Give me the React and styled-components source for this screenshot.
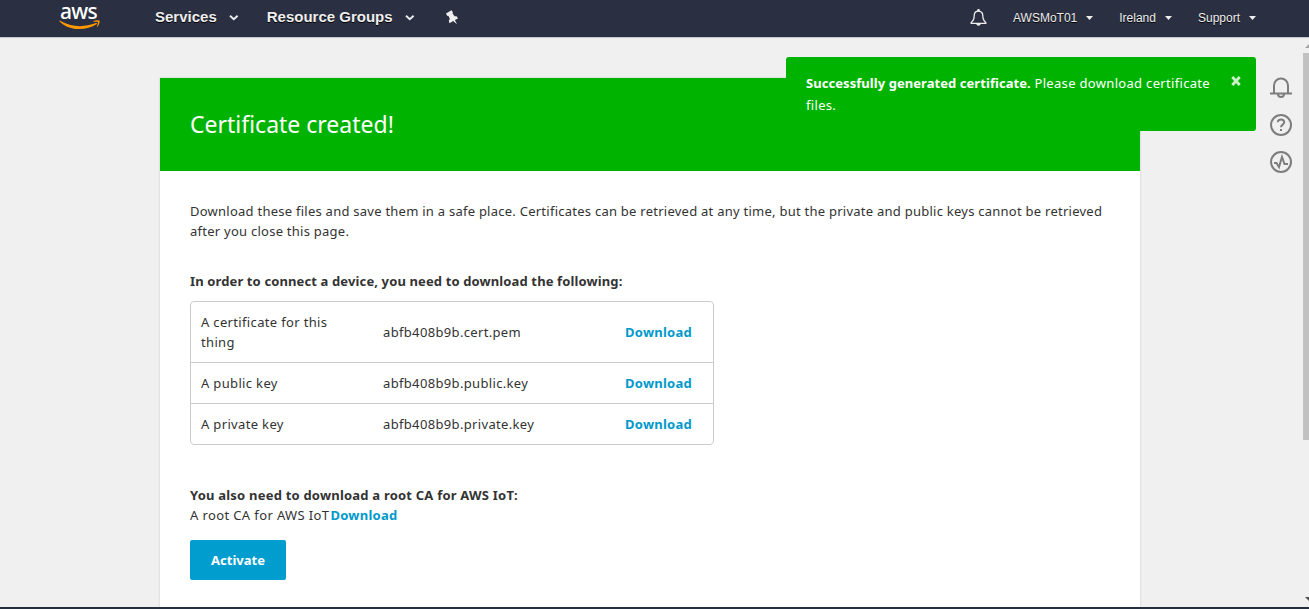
import React from "react";
import styled, { createGlobalStyle } from "styled-components";

const GlobalStyle = createGlobalStyle`
  * { box-sizing: border-box; }
  body { margin: 0; background: #f0f0f0; overflow: hidden; }
`;

const Screen = styled.div`
  position: relative;
  display: flex;
  flex-direction: column;
  height: 609px;
  overflow: hidden;
  background: #f0f0f0;
  border-bottom: 2px solid #232f3e;
  color: #333;
  font-family: "Noto Sans", "Open Sans", sans-serif;
  font-size: 13px;
  line-height: 20px;
`;

const NavBar = styled.header`
  flex: none;
  display: flex;
  align-items: center;
  height: 38px;
  padding: 0 53px 3px 59px;
  background: #2a3042;
  border-bottom: 1px solid #c4c5c8;
  color: #eee;
  font-family: "Liberation Sans", Arial, sans-serif;
`;

const Logo = styled.div`
  display: flex;
  flex-direction: column;
  width: 42px;
  height: 31px;
  margin: 3px 54px 0 0;
  color: #fff;
`;

const LogoText = styled.span`
  height: 17px;
  padding-left: 1px;
  font: 500 21px/16px "Noto Sans", sans-serif;
  letter-spacing: -0.7px;
`;

const NavItem = styled.div`
  display: flex;
  align-items: center;
  gap: 12px;
  margin-right: 28px;
  font-size: 15px;
  font-weight: bold;
  text-shadow: 0 1px 0 #000;
`;

const Pin = styled.svg`
  margin-left: 2px;
`;

const AccountItems = styled.div`
  display: flex;
  align-items: center;
  gap: 26px;
  margin: 2px 0 0 auto;
  font-size: 12px;
  text-shadow: 0 1px 0 #000;
`;

const AccountItem = styled.span`
  display: flex;
  align-items: center;
  gap: 9px;
`;

const Content = styled.main`
  flex: 1;
  min-height: 0;
  display: flex;
  padding: 38px 0 0 160px;
`;

const Card = styled.section`
  width: 980px;
  margin-top: 2px;
  background: #fff;
  box-shadow: 0 0 2px rgba(0, 0, 0, 0.18);
`;

const CardHeader = styled.div`
  height: 93px;
  padding: 29px 30px;
  background: #00b300;
  color: #fff;
`;

const Title = styled.h1`
  margin: 0;
  font-size: 23px;
  font-weight: 400;
  line-height: 34px;
`;

const CardBody = styled.div`
  display: flex;
  flex-direction: column;
  align-items: flex-start;
  padding: 30px;
`;

const Text = styled.p`
  margin: 0;
  white-space: nowrap;
  letter-spacing: ${(p) => p.$spacing || "0.25px"};
`;

const Strong = styled.strong`
  letter-spacing: 0.06px;
`;

const Subheading = styled.h2`
  margin: ${(p) => p.$top} 0 0;
  font-size: 13px;
  font-weight: 700;
  line-height: 20px;
  letter-spacing: ${(p) => p.$spacing || "0"};
`;

const FileTable = styled.div`
  width: 524px;
  margin-top: 10px;
  border: 1px solid #ccc;
  border-radius: 4px;
`;

const FileRow = styled.div`
  display: grid;
  grid-template-columns: 182px 1fr 78px;
  align-items: center;
  padding: 10px;
  letter-spacing: 0.34px;
  & + & { border-top: 1px solid #ccc; }
`;

const FileLabel = styled.span`
  max-width: 150px;
`;

const Link = styled.a`
  margin-left: ${(p) => (p.$inline ? "1px" : "0")};
  color: #0099cc;
  font-weight: 700;
  letter-spacing: 0.25px;
`;

const ActivateButton = styled.button`
  width: 96px;
  height: 40px;
  margin-top: 15px;
  padding: 0;
  border: 0;
  border-radius: 2px;
  background: #009dce;
  color: #fff;
  font: 700 13px/20px "Noto Sans", sans-serif;
`;

const Toast = styled.div`
  position: absolute;
  top: 57px;
  left: 786px;
  display: flex;
  justify-content: space-between;
  width: 470px;
  height: 74px;
  padding: 15px 14px 0 20px;
  border-radius: 3px;
  background: #00b300;
  color: #fff;
  line-height: 22px;
`;

const Close = styled.svg`
  margin-top: 3px;
`;

const SideIcons = styled.aside`
  display: flex;
  flex-direction: column;
  gap: 13px;
  padding-left: 129px;
`;

const ScrollTrack = styled.div`
  position: absolute;
  top: 38px;
  right: 0;
  bottom: 0;
  width: 6px;
  display: flex;
  flex-direction: column;
  justify-content: space-between;
  background: #f0f0f0;
`;

const ScrollThumb = styled.div`
  height: 387px;
  margin-bottom: auto;
  background: #c1c1c1;
`;

const NavChevron = () => (
  <svg width="10" height="7" viewBox="0 0 10 7" fill="none">
    <path d="M1 1.8 4.8 5.2 8.6 1.8" stroke="#eee" strokeWidth="1.9" />
  </svg>
);

const Caret = () => (
  <svg width="7" height="4" viewBox="0 0 7 4">
    <path d="M0 0h7L3.5 4z" fill="#eee" />
  </svg>
);

const files = [
  ["A certificate for this thing", "abfb408b9b.cert.pem"],
  ["A public key", "abfb408b9b.public.key"],
  ["A private key", "abfb408b9b.private.key"],
];

export default function App() {
  return (
    <Screen>
      <GlobalStyle />
      <NavBar>
        <Logo>
          <LogoText>aws</LogoText>
          <svg width="42" height="10" viewBox="0 0 42 10">
            <path d="M.4 1.2C.1.7.6.4 1 .8 12 7.3 25 7.6 37 3.1c.8-.3 1.4.5.7 1C27.5 11 10 11.4.4 1.2z" fill="#f90" />
            <path d="M34.6 1.1c2-1.3 5.4-1 5.9-.4.5.7-.2 4.3-2.2 6-.3.3-.7.1-.5-.3.6-1.2 1.5-3.7 1.1-4.3-.4-.5-2.8-.4-4.1-.3-.5 0-.6-.4-.2-.7z" fill="#f90" />
          </svg>
        </Logo>
        <NavItem>Services<NavChevron /></NavItem>
        <NavItem>Resource Groups<NavChevron /></NavItem>
        <Pin width="14" height="15" viewBox="0 0 14 15">
          <path d="M1 3.400 6.400.300 7.900 2.200 7.600 3.600 9.600 6.300 11.600 6.200 13 8.600 9.900 10.100 12 14.200 8.200 11 4.600 13.200 3.700 10.800 4.900 9 3.500 6.100 2.100 5.700z" fill="#eee" />
        </Pin>
        <AccountItems>
          <svg width="17" height="18" viewBox="0 0 17 18" fill="none">
            <path d="M8.5 2.2c-3 0-4.3 2-4.3 4.6 0 3.7-.7 5-3 6.7v.8h14.6v-.8c-2.3-1.7-3-3-3-6.7 0-2.6-1.3-4.6-4.3-4.6z" stroke="#eee" strokeWidth="1.3" />
            <path d="M7.2 1.2a1.3 1.3 0 0 1 2.6 0v1H7.2zM6.3 14.5h4.4c0 3-4.4 3-4.4 0z" fill="#eee" />
          </svg>
          <AccountItem>AWSMoT01<Caret /></AccountItem>
          <AccountItem>Ireland<Caret /></AccountItem>
          <AccountItem>Support<Caret /></AccountItem>
        </AccountItems>
      </NavBar>
      <Content>
        <Card>
          <CardHeader><Title>Certificate created!</Title></CardHeader>
          <CardBody>
            <Text>
              Download these files and save them in a safe place. Certificates can be retrieved at any time, but the private and public keys cannot be retrieved
              <br />
              after you close this page.
            </Text>
            <Subheading $top="30px" $spacing="0.125px">In order to connect a device, you need to download the following:</Subheading>
            <FileTable>
              {files.map(([label, file]) => (
                <FileRow key={file}>
                  <FileLabel>{label}</FileLabel>
                  <span>{file}</span>
                  <Link>Download</Link>
                </FileRow>
              ))}
            </FileTable>
            <Subheading $top="40px" $spacing="0.21px">You also need to download a root CA for AWS IoT:</Subheading>
            <Text $spacing="0.38px">A root CA for AWS IoT<Link $inline>Download</Link></Text>
            <ActivateButton>Activate</ActivateButton>
          </CardBody>
        </Card>
        <SideIcons>
          <svg width="24" height="24" viewBox="0 0 24 24" fill="none" stroke="#7d7d7d" strokeWidth="2">
            <path d="M1 17.5h22M5 17.5V9.500a7 7 0 0 1 14 0v8M9 18a3 3 0 0 0 6 0" />
          </svg>
          <svg width="24" height="24" viewBox="0 0 24 24" fill="none" stroke="#7d7d7d" strokeWidth="2">
            <circle cx="12" cy="12" r="10" />
            <path d="M8.8 9.3c0-3.9 6.4-3.7 6.4 0 0 2.4-3.2 2.2-3.2 5M12 16v2" />
          </svg>
          <svg width="24" height="24" viewBox="0 0 24 24" fill="none" stroke="#7d7d7d" strokeWidth="2">
            <circle cx="12" cy="12" r="10" />
            <path d="M5 13h2.500l2.500 4 3-10 2.500 7h3.500" />
          </svg>
        </SideIcons>
      </Content>
      <Toast>
        <Text $spacing="0.32px"><Strong>Successfully generated certificate.</Strong> Please download certificate<br />files.</Text>
        <Close width="12" height="12" viewBox="0 0 12 12"><path d="M2.3 2l7.400 8M9.700 2l-7.400 8" stroke="#ccf0cc" strokeWidth="2.8" /></Close>
      </Toast>
      <ScrollTrack>
        <svg width="6" height="15" viewBox="0 0 6 15"><path d="M2 10 6 6v4z" fill="#a3a3a3" /></svg>
        <ScrollThumb />
        <svg width="6" height="15" viewBox="0 0 6 15"><path d="M2 5h4v4z" fill="#505050" /></svg>
      </ScrollTrack>
    </Screen>
  );
}
